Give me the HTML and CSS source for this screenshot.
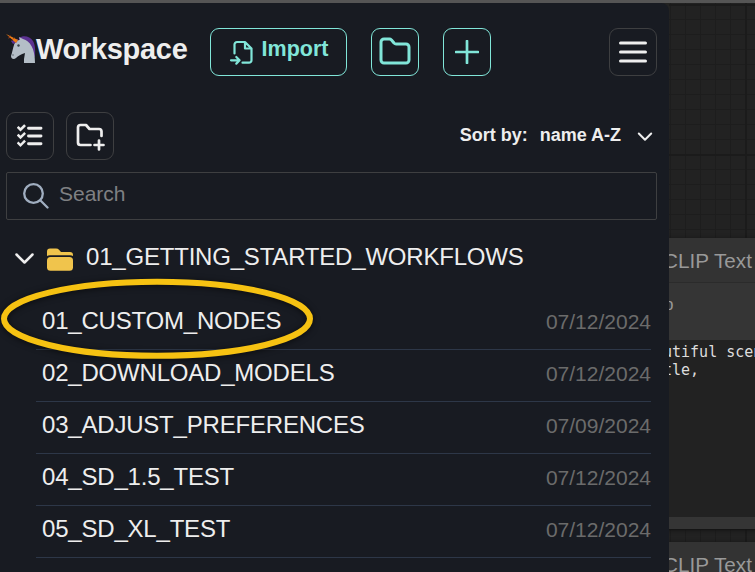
FILE: index.html
```
<!DOCTYPE html>
<html lang="en">
<head>
<meta charset="utf-8">
<title>Workspace</title>
<link rel="stylesheet" href="styles.css">
</head>
<body>
<div class="app">
  <main class="panel">
    <header class="header">
      <svg class="unicorn" viewBox="0 0 30 30">
        <path fill="#5b3290" d="M13 4C17 1 24 2 27 7C30 12 29 20 29 23L22 20L13 8Z"/>
        <path fill="#b4bec7" d="M13 3L17 5C24 7 29 14 29 29H18V25L19 19C15 20 12 22 10 24C8 26 5 25 5 22C6 19 7 14 8 11C9 7 12 6 14 6Z"/>
        <path fill="#5b3290" d="M5 7L12 5L11 8L7 10Z"/>
        <path fill="#ef7d12" d="M0 0L12 6L10 9Z"/>
        <path stroke="#b54c1d" stroke-width="1" d="M4 2L3 4M8 4L6 6"/>
        <circle cx="12.500" cy="11.500" r="1.200" fill="#39434c"/>
        <circle cx="7" cy="21" r=".8" fill="#59636c"/>
      </svg>
      <h1 class="title">Workspace</h1>
      <button class="btn accent import">
        <svg class="icon-import" viewBox="0 0 24 26"><path d="M5.500 13.500V4.500a2.500 2.500 0 0 1 2.500-2.500H16L22.500 8.500V20.200a2.500 2.500 0 0 1-2.500 2.500H13.500M16 2V8.500H22.500M2 20.300H10.500M7.300 17l3.300 3.300-3.300 3.300"/></svg>
        <span>Import</span>
      </button>
      <button class="btn accent" aria-label="Open folder">
        <svg class="icon-folder" viewBox="0 0 32 28"><path d="M5 2h5.500q1 0 2 1l2.500 3Q16 7 17 7h10a3 3 0 0 1 3 3v13a3 3 0 0 1-3 3H5a3 3 0 0 1-3-3V5a3 3 0 0 1 3-3Z"/></svg>
      </button>
      <button class="btn accent" aria-label="Add">
        <svg class="icon-plus" viewBox="0 0 24 24"><path d="M12 1v22M1 12h22"/></svg>
      </button>
      <button class="btn menu" aria-label="Menu">
        <svg class="icon-menu" viewBox="0 0 28 22"><path d="M1.500 2h25M1.500 11h25M1.500 20h25"/></svg>
      </button>
    </header>
    <div class="toolbar">
      <button class="btn" aria-label="Select">
        <svg class="icon-checks" viewBox="0 0 26 24"><path d="M11.500 4.300h12.500M11.500 12h12.500M11.500 19.800h12.500"/><path class="ticks" d="M1.500 3.700l2 2 3.700-3.700M1.500 11.500l2 2 3.700-3.700M1.500 19.300l2 2 3.700-3.700"/></svg>
      </button>
      <button class="btn" aria-label="New folder">
        <svg class="icon-new" viewBox="0 0 30 30"><path d="M14.500 23H4.500a2.500 2.500 0 0 1-2.500-2.500V5.500a2.500 2.500 0 0 1 2.500-2.500h5.500l3.500 4H23a2.500 2.500 0 0 1 2.500 2.500V14M18.500 23h9M23 18.500v9"/></svg>
      </button>
      <label class="sort"><span>Sort by:</span><strong>name A-Z</strong>
        <svg class="chevron" viewBox="0 0 16 10"><path d="M1.800 1.500L8 7.800L14.200 1.500"/></svg>
      </label>
    </div>
    <div class="search">
      <svg class="icon-search" viewBox="0 0 26 26"><circle cx="10.500" cy="10.500" r="9.300"/><path d="M17.500 17.500L24.500 24.500"/></svg>
      <span>Search</span>
    </div>
    <div class="folder">
      <svg class="caret" viewBox="0 0 19 12"><path d="M1.500 1.500L9.500 9.500L17.500 1.500"/></svg>
      <svg class="folder-icon" viewBox="0 0 26 23"><path d="M0 8V3.500Q0 .5 3 .5H9Q11 .5 12 1.800L14 4H23Q26 4 26 7V8Q25 7.300 23 7.300H3Q1 7.300 0 8Z"/><rect y="9" width="26" height="13.700" rx="3.500"/></svg>
      <span>01_GETTING_STARTED_WORKFLOWS</span>
    </div>
    <ul class="files">
      <li><span>01_CUSTOM_NODES</span><time>07/12/2024</time></li>
      <li><span>02_DOWNLOAD_MODELS</span><time>07/12/2024</time></li>
      <li><span>03_ADJUST_PREFERENCES</span><time>07/09/2024</time></li>
      <li><span>04_SD_1.5_TEST</span><time>07/12/2024</time></li>
      <li><span>05_SD_XL_TEST</span><time>07/12/2024</time></li>
    </ul>
    <svg class="highlight" viewBox="0 0 320 90"><ellipse cx="157" cy="43.800" rx="153" ry="37"/></svg>
  </main>
  <div class="canvas">
    <section class="node node-first">
      <div class="node-title">CLIP Text</div>
      <div class="node-slot">p</div>
      <div class="node-prompt">utiful scen<br>tle,</div>
    </section>
    <section class="node node-second">
      <div class="node-title">CLIP Text</div>
    </section>
  </div>
</div>
</body>
</html>
```
FILE: styles.css
```
* { box-sizing: border-box; }
body { margin: 0; background: #222; font-family: "Liberation Sans", Arial, sans-serif; }
.app { display: flex; height: 572px; overflow: hidden; border-top: 3px solid #555; }
svg { display: block; fill: none; stroke: currentColor; stroke-linecap: round; stroke-linejoin: round; flex: none; }

.canvas {
  position: relative; flex: 1; overflow: hidden;
  background-color: #222;
  background-image:
    linear-gradient(90deg, #1b1b1b 2px, transparent 2px),
    linear-gradient(#1b1b1b 2px, transparent 2px),
    linear-gradient(90deg, #1d1d1d 1px, transparent 1px),
    linear-gradient(#1d1d1d 1px, transparent 1px);
  background-size: 150px 150px, 150px 150px, 15px 15px, 15px 15px;
  background-position: 76px 0, 0 151px, 1px 0, 0 1px;
}
.node { position: absolute; left: -10px; width: 110px; background: #353535; color: #999; box-shadow: 0 1px 4px #111; }
.node-first { top: 235px; height: 291px; }
.node-second { top: 539px; height: 80px; }
.node-title { height: 45px; padding-left: 4px; background: #333; border-bottom: 1px solid #2b2b2b; font-size: 20.700px; line-height: 46px; white-space: nowrap; }
.node-slot { height: 57px; padding-left: 5px; font-size: 17px; line-height: 44px; }
.node-prompt { height: 177px; padding-top: 3px; background: #222; color: #ddd; font: 15px/18px "DejaVu Sans Mono", monospace; white-space: nowrap; }
.node-prompt { padding-left: 4px; }

.panel { position: relative; flex: none; width: 669px; height: 569px; padding: 25px 12px 0 6px; background: #181b22; color: #eee; border-top-right-radius: 8px; }
.header { display: flex; height: 48px; }
.unicorn { width: 30px; height: 30px; margin-top: 6px; stroke: none; }
.title { width: 174px; margin: 0; font-size: 29px; line-height: 42px; letter-spacing: -.3px; }
.btn { display: flex; align-items: center; justify-content: center; width: 48px; height: 48px; padding: 0; border: 1px solid #3e3f41; border-radius: 9px; background: none; color: #eee; font: bold 21.500px "Liberation Sans", Arial, sans-serif; }
.accent { margin-right: 24px; border-color: #81e6d9; color: #81e6d9; }
.import { width: 137px; gap: 9px; }
.import span { margin-top: -5px; }
.menu { margin-left: auto; }
.icon-import { width: 24px; height: 26px; margin-top: 2px; stroke-width: 2.200; }
.icon-folder { width: 32px; height: 28px; margin-top: -2px; stroke-width: 3; }
.icon-plus { width: 24px; height: 24px; stroke-width: 2.700; }
.icon-menu { width: 28px; height: 22px; stroke-width: 3; }

.toolbar { display: flex; gap: 12px; margin-top: 36px; }
.icon-checks { width: 26px; height: 24px; stroke-width: 2.900; }
.ticks { stroke-linecap: square; stroke-linejoin: miter; stroke-width: 2.500; }
.icon-new { width: 30px; height: 30px; margin-top: 1px; margin-left: 1px; stroke-width: 2.700; }
.sort { display: flex; align-items: center; margin-left: auto; padding: 0 4px 2px 0; font-size: 18px; font-weight: bold; }
.sort strong { margin: 0 16px 0 12px; }
.chevron { width: 16px; height: 10px; margin-top: 3px; stroke-width: 2; }

.search { display: flex; align-items: center; height: 48px; margin-top: 12px; padding-left: 16px; border: 1px solid #3e3f41; border-radius: 2px; color: #7f8083; font-size: 21px; }
.search span { margin: -4px 0 0 10px; }
.icon-search { width: 26px; height: 26px; color: #a0aec0; stroke-width: 2.300; }

.folder { display: flex; align-items: center; height: 50px; margin-top: 12px; padding-left: 9px; font-size: 24px; letter-spacing: -.2px; }
.folder span { margin: -1px 0 0 13px; white-space: nowrap; }
.caret { width: 19px; height: 12px; margin-top: 4px; stroke-width: 2.500; }
.folder-icon { width: 26px; height: 23px; margin: 5px 0 0 13px; fill: #f0c44c; stroke: none; }
.files { margin: 16px 0 0 30px; padding: 0; list-style: none; }
.files li { display: flex; align-items: center; justify-content: space-between; width: 615px; height: 52px; padding: 0 0 5px 6px; border-bottom: 1px solid #2d3748; font-size: 24px; letter-spacing: -.2px; }
.files time { margin-top: 2px; color: #6b6b6b; font-size: 21px; letter-spacing: 0; }
.highlight { position: absolute; left: 0; top: 272px; width: 320px; height: 90px; stroke: #f6c212; stroke-width: 6; filter: drop-shadow(0 1px 3px rgba(0,0,0,.6)); }
```
